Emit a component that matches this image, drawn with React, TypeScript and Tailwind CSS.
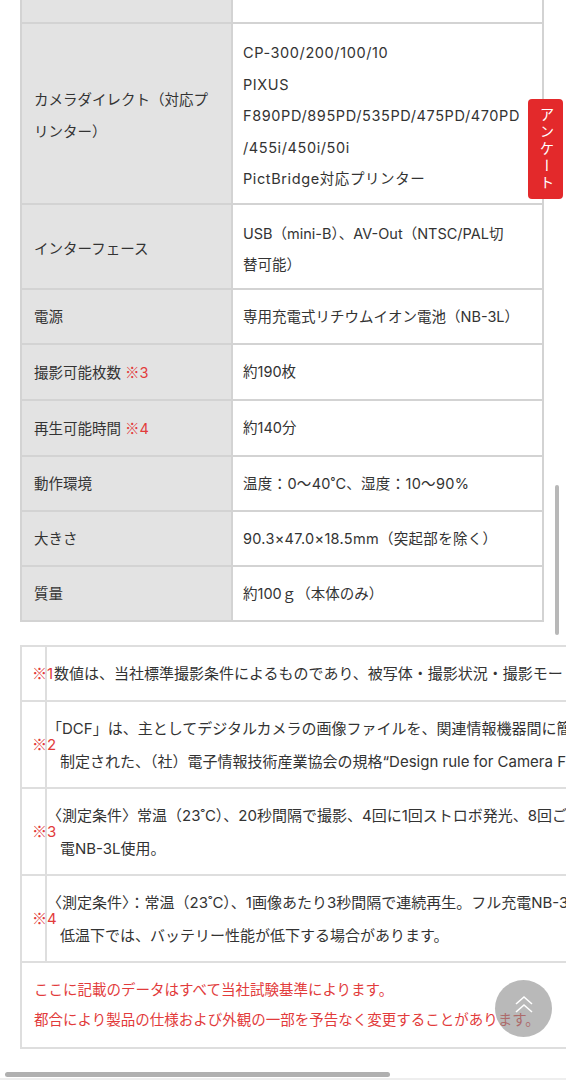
import React from "react";

const RED = "text-[#e23b3b]";

function Kome({ n }: { n: string }) {
  return (
    <>
      <span className="font-['Noto_Sans_CJK_JP',sans-serif]">※</span>
      {n}
    </>
  );
}

function SpecRow({
  label,
  mark,
  children,
  leading = "leading-[31px]",
  multi = false,
  tdExtra = "",
}: {
  label: React.ReactNode;
  mark?: string;
  children: React.ReactNode;
  leading?: string;
  multi?: boolean;
  tdExtra?: string;
}) {
  const pad = multi ? "pt-[13px] pb-[8px]" : "py-[11px]";
  return (
    <tr>
      <th
        className={`border-2 border-[#d3d3d3] bg-[#e3e3e3] px-[12px] ${pad} text-left align-middle font-normal ${leading}`}
      >
        {label}
        {mark && (
          <span className={`ml-[4px] ${RED}`}>
            <Kome n={mark} />
          </span>
        )}
      </th>
      <td className={`border-2 border-[#d3d3d3] bg-white px-[10px] ${pad} align-middle ${leading} ${tdExtra}`}>
        {children}
      </td>
    </tr>
  );
}

function NoteRow({
  mark,
  lines,
  indent,
}: {
  mark: string;
  lines: string[];
  indent: string;
}) {
  const pad = lines.length > 1 ? "pt-[10px] pb-[9px]" : "py-[10px]";
  return (
    <tr>
      <th className="overflow-visible whitespace-nowrap border-2 border-[#dedede] pl-[10px] text-left align-middle font-normal text-[#e23b3b]">
        <Kome n={mark} />
      </th>
      <td className={`whitespace-nowrap border-2 border-[#dedede] ${pad} pl-[13px] align-middle leading-[33px]`}>
        {lines.map((l, i) => (
          <div key={i} className={i === 0 ? indent : ""}>
            {l}
          </div>
        ))}
      </td>
    </tr>
  );
}

export default function App() {
  return (
    <div className="relative h-[1080px] w-[566px] overflow-hidden bg-white font-[Inter,'Noto_Sans_CJK_JP',sans-serif] text-[#333]">
      {/* Spec table */}
      <div className="pl-[20px]">
        <table className="w-[524px] table-fixed border-collapse text-[14.5px]">
          <colgroup>
            <col className="w-[211px]" />
            <col />
          </colgroup>
          <tbody>
            <tr className="h-[23px]">
              <th className="border-2 border-t-0 border-[#d3d3d3] bg-[#e3e3e3] p-0 font-normal"></th>
              <td className="border-2 border-t-0 border-[#d3d3d3] bg-white p-0"></td>
            </tr>
            <SpecRow
              label="カメラダイレクト（対応プリンター）"
              leading="leading-[31.6px]"
              multi
              tdExtra="tracking-[0.6px]"
            >
              CP-300/200/100/10
              <br />
              PIXUS
              <br />
              F890PD/895PD/535PD/475PD/470PD
              <br />
              /455i/450i/50i
              <br />
              PictBridge対応プリンター
            </SpecRow>
            <SpecRow label="インターフェース" multi>
              USB（mini-B）、AV-Out（NTSC/PAL切
              <br />
              替可能）
            </SpecRow>
            <SpecRow label="電源">専用充電式リチウムイオン電池（NB-3L）</SpecRow>
            <SpecRow label="撮影可能枚数" mark="3">
              約190枚
            </SpecRow>
            <SpecRow label="再生可能時間" mark="4">
              約140分
            </SpecRow>
            <SpecRow label="動作環境" tdExtra="tracking-[0.3px]">
              温度：0〜40˚C、湿度：10〜90%
            </SpecRow>
            <SpecRow label="大きさ" tdExtra="tracking-[0.3px]">
              90.3×47.0×18.5mm（突起部を除く）
            </SpecRow>
            <SpecRow label="質量">約100ｇ（本体のみ）</SpecRow>
          </tbody>
        </table>
      </div>

      {/* Notes table (horizontally scrollable) */}
      <div className="mt-[23px] overflow-hidden pl-[20px]">
        <table className="w-[1150px] table-fixed border-collapse text-[15px]">
          <colgroup>
            <col className="w-[25px]" />
            <col />
          </colgroup>
          <tbody>
            <NoteRow
              mark="1"
              indent="-ml-[6px]"
              lines={[
                "数値は、当社標準撮影条件によるものであり、被写体・撮影状況・撮影モード等により異なります。",
              ]}
            />
            <NoteRow
              mark="2"
              indent="-ml-[13px]"
              lines={[
                "「DCF」は、主としてデジタルカメラの画像ファイルを、関連情報機器間に簡便に利用しあえることを目的として",
                "制定された、（社）電子情報技術産業協会の規格“Design rule for Camera File system”の略称です。",
              ]}
            />
            <NoteRow
              mark="3"
              indent="-ml-[13px]"
              lines={[
                "〈測定条件〉常温（23˚C）、20秒間隔で撮影、4回に1回ストロボ発光、8回ごとに電源オン／オフ。フル充",
                "電NB-3L使用。",
              ]}
            />
            <NoteRow
              mark="4"
              indent="-ml-[13px]"
              lines={[
                "〈測定条件〉：常温（23˚C）、1画像あたり3秒間隔で連続再生。フル充電NB-3L使用。",
                "低温下では、バッテリー性能が低下する場合があります。",
              ]}
            />
            <tr>
              <td
                colSpan={2}
                className={`border-2 border-[#dedede] px-[12px] py-[12px] text-[14.5px] leading-[30px] ${RED}`}
              >
                ここに記載のデータはすべて当社試験基準によります。
                <br />
                都合により製品の仕様および外観の一部を予告なく変更することがあります。
              </td>
            </tr>
          </tbody>
        </table>
      </div>

      {/* Survey tab */}
      <div className="absolute left-[528px] top-[99px] flex h-[100px] w-[35px] items-center justify-center rounded-[4px] bg-[#e3292b] text-[14.5px] tracking-[2.5px] text-white [writing-mode:vertical-rl]">
        アンケート
      </div>

      {/* Scroll to top button */}
      <button className="absolute left-[495px] top-[980px] flex h-[57px] w-[57px] items-center justify-center rounded-full bg-[#8a8a8a]/60">
        <svg width="20" height="20" viewBox="0 0 20 20" fill="none" className="-mt-[8px]">
          <polyline points="2,9 10,2 18,9" stroke="white" strokeWidth="1.6" />
          <polyline points="2,17 10,10 18,17" stroke="white" strokeWidth="1.6" />
        </svg>
      </button>

      {/* Scroll indicators */}
      <div className="absolute left-[555px] top-[485px] h-[150px] w-[4px] rounded-full bg-[#b8b8b8]" />
      <div className="absolute left-[5px] top-[1072px] h-[5px] w-[385px] rounded-full bg-[#b0b0b0]" />
      <div className="absolute bottom-0 left-0 h-[2px] w-full bg-[#eeeeee]" />
    </div>
  );
}
